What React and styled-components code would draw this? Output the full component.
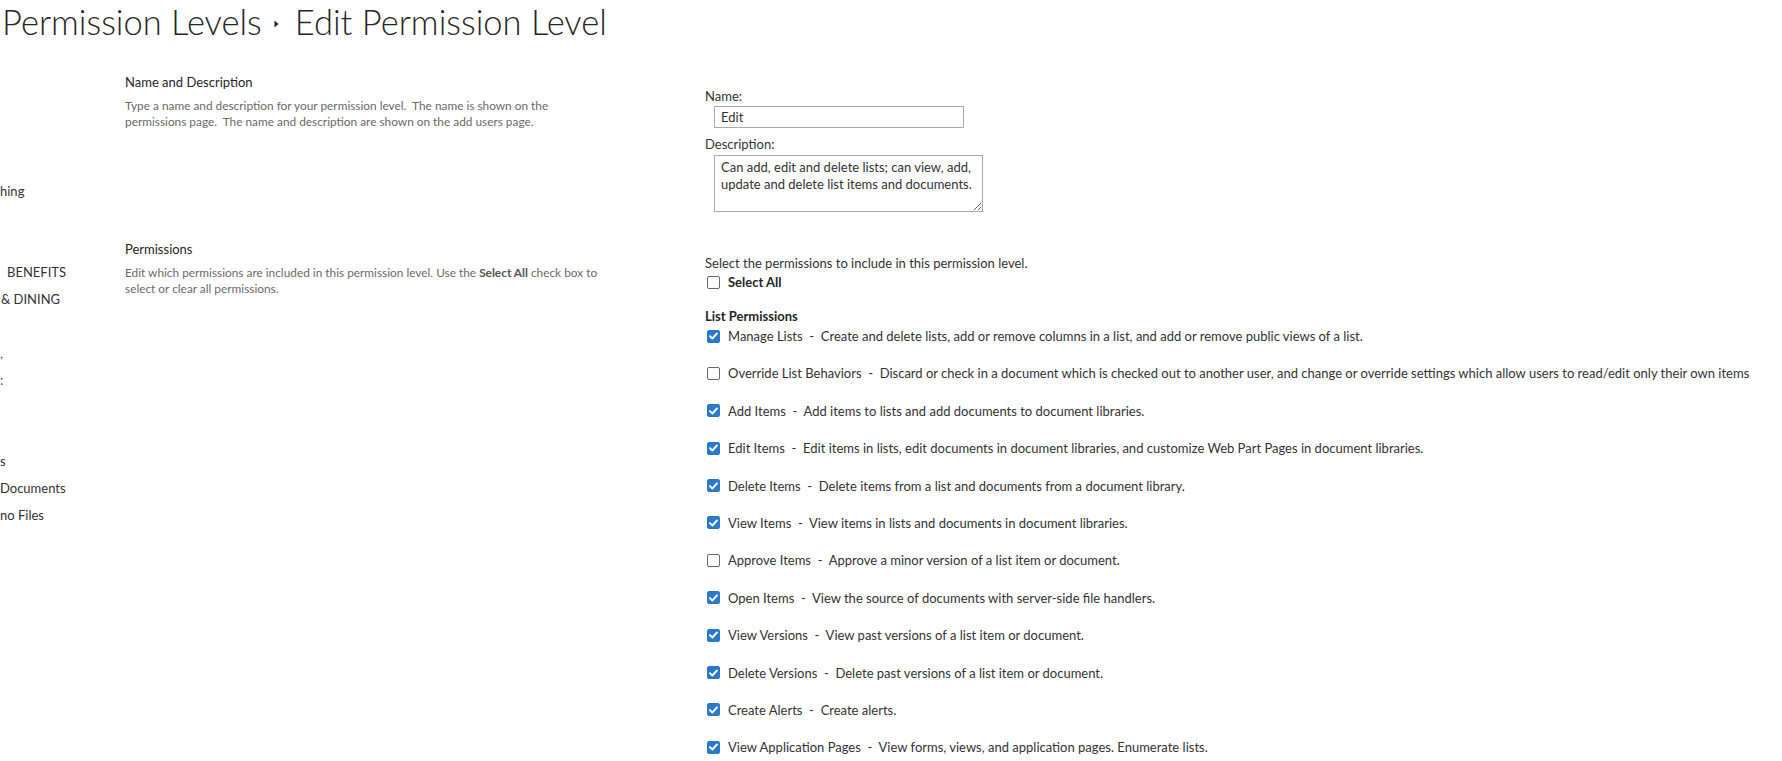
import React from "react";
import styled, { createGlobalStyle } from "styled-components";

const GlobalStyle = createGlobalStyle`
  html, body {
    margin: 0;
    padding: 0;
    background: #ffffff;
  }
  body {
    font-family: Lato, "Open Sans", "Liberation Sans", sans-serif;
    color: #333333;
    overflow: hidden;
  }
`;

const navItems = [
  { text: "hing", indent: 0 },
  { text: "" },
  { text: "" },
  { text: "BENEFITS", indent: 7 },
  { text: "& DINING", indent: 1 },
  { text: "" },
  { text: ",", indent: 0, link: true },
  { text: ":", indent: 0, link: true },
  { text: "" },
  { text: "" },
  { text: "s", indent: 0 },
  { text: "Documents", indent: 0 },
  { text: "no Files", indent: 0 },
];

const permissions = [
  { name: "Manage Lists", desc: "Create and delete lists, add or remove columns in a list, and add or remove public views of a list.", on: true },
  { name: "Override List Behaviors", desc: "Discard or check in a document which is checked out to another user, and change or override settings which allow users to read/edit only their own items", on: false },
  { name: "Add Items", desc: "Add items to lists and add documents to document libraries.", on: true },
  { name: "Edit Items", desc: "Edit items in lists, edit documents in document libraries, and customize Web Part Pages in document libraries.", on: true },
  { name: "Delete Items", desc: "Delete items from a list and documents from a document library.", on: true },
  { name: "View Items", desc: "View items in lists and documents in document libraries.", on: true },
  { name: "Approve Items", desc: "Approve a minor version of a list item or document.", on: false },
  { name: "Open Items", desc: "View the source of documents with server-side file handlers.", on: true },
  { name: "View Versions", desc: "View past versions of a list item or document.", on: true },
  { name: "Delete Versions", desc: "Delete past versions of a list item or document.", on: true },
  { name: "Create Alerts", desc: "Create alerts.", on: true },
  { name: "View Application Pages", desc: "View forms, views, and application pages. Enumerate lists.", on: true },
];

function CheckBox({ checked }) {
  return (
    <Box $checked={checked}>
      {checked && (
        <svg width="9" height="8" viewBox="0 0 9 8">
          <path
            d="M1 4.2 L3.4 6.5 L8 1.4"
            fill="none"
            stroke="#ffffff"
            strokeWidth="1.9"
            strokeLinecap="round"
            strokeLinejoin="round"
          />
        </svg>
      )}
    </Box>
  );
}

export default function App() {
  return (
    <Page>
      <GlobalStyle />
      <Title>
        <span>Permission Levels</span>
        <Separator width="5" height="8" viewBox="0 0 5 8">
          <path d="M0.5 0.5 L4.5 4 L0.5 7.5 Z" fill="#262626" />
        </Separator>
        <span>Edit Permission Level</span>
      </Title>
      <Body>
        <Nav>
          {navItems.map((item, i) => (
            <NavItem key={i} $indent={item.indent || 0} $link={item.link}>
              {item.text}
            </NavItem>
          ))}
        </Nav>
        <Form>
          <Section $top={29}>
            <SectionInfo>
              <SectionHeading>Name and Description</SectionHeading>
              <SectionText>
                Type a name and description for your permission level.&nbsp; The name is shown on the
                <br />
                permissions page.&nbsp; The name and description are shown on the add users page.
              </SectionText>
            </SectionInfo>
            <Controls>
              <FieldLabel>Name:</FieldLabel>
              <TextInput type="text" defaultValue="Edit" />
              <FieldLabel $top={7}>Description:</FieldLabel>
              <TextArea
                readOnly
                defaultValue="Can add, edit and delete lists; can view, add, update and delete list items and documents."
              />
            </Controls>
          </Section>
          <Section $top={28}>
            <SectionInfo>
              <SectionHeading>Permissions</SectionHeading>
              <SectionText>
                Edit which permissions are included in this permission level. Use the <b>Select All</b> check box to
                <br />
                select or clear all permissions.
              </SectionText>
            </SectionInfo>
            <Controls>
              <FieldLabel>Select the permissions to include in this permission level.</FieldLabel>
              <CheckRow>
                <CheckBox checked={false} />
                <CheckLabel $bold>Select All</CheckLabel>
              </CheckRow>
              <GroupHeading>List Permissions</GroupHeading>
              <PermList>
                {permissions.map((p) => (
                  <PermRow key={p.name}>
                    <CheckBox checked={p.on} />
                    <CheckLabel>
                      {p.name}
                      {"  -  "}
                      {p.desc}
                    </CheckLabel>
                  </PermRow>
                ))}
              </PermList>
            </Controls>
          </Section>
        </Form>
      </Body>
    </Page>
  );
}

const Page = styled.div`
  width: 1782px;
  height: 761px;
  overflow: hidden;
`;

const Title = styled.h1`
  margin: 0;
  padding-left: 2px;
  display: flex;
  align-items: center;
  height: 44px;
  font-size: 34.5px;
  line-height: 44px;
  font-weight: 300;
  color: #262626;
  white-space: nowrap;
`;

const Separator = styled.svg`
  flex: none;
  margin: 4px 16px 0 12px;
`;

const Body = styled.div`
  display: flex;
`;

const Nav = styled.nav`
  flex: none;
  width: 125px;
  padding-top: 134px;
  display: flex;
  flex-direction: column;
  overflow: hidden;
`;

const NavItem = styled.div`
  height: 27px;
  line-height: 27px;
  font-size: 13px;
  white-space: nowrap;
  margin-left: ${(p) => p.$indent}px;
  color: ${(p) => (p.$link ? "#2a5f9e" : "#333333")};
`;

const Form = styled.div`
  flex: 1;
  display: flex;
  flex-direction: column;
`;

const Section = styled.section`
  display: grid;
  grid-template-columns: 580px 1fr;
  padding-top: ${(p) => p.$top}px;
`;

const SectionInfo = styled.div`
  display: flex;
  flex-direction: column;
`;

const SectionHeading = styled.h3`
  margin: 0;
  font-size: 13px;
  line-height: 18px;
  font-weight: 400;
  color: #262626;
`;

const SectionText = styled.p`
  margin: 7px 0 0;
  font-size: 11.85px;
  line-height: 16px;
  color: #6a6a6a;
  white-space: nowrap;

  b {
    font-weight: 700;
    color: #555555;
  }
`;

const Controls = styled.div`
  padding-top: 14px;
  display: flex;
  flex-direction: column;
  align-items: flex-start;
`;

const FieldLabel = styled.div`
  margin-top: ${(p) => p.$top || 0}px;
  font-size: 13px;
  line-height: 18px;
  color: #333333;
`;

const TextInput = styled.input`
  box-sizing: border-box;
  margin: 1px 0 0 9px;
  width: 250px;
  height: 22px;
  padding: 0 6px;
  border: 1px solid #ababab;
  border-radius: 0;
  font-family: inherit;
  font-size: 13px;
  color: #333333;
  outline: none;
`;

const TextArea = styled.textarea`
  box-sizing: border-box;
  display: block;
  margin: 2px 0 0 9px;
  width: 269px;
  height: 57px;
  padding: 3px 6px;
  border: 1px solid #ababab;
  border-radius: 0;
  font-family: inherit;
  font-size: 13px;
  line-height: 17px;
  color: #333333;
  resize: both;
  outline: none;
`;

const CheckRow = styled.div`
  display: flex;
  align-items: center;
  gap: 8px;
  height: 20px;
  padding-left: 2px;
`;

const PermRow = styled(CheckRow)`
  margin-bottom: 17.4px;
`;

const Box = styled.span`
  box-sizing: border-box;
  flex: none;
  width: 13px;
  height: 13px;
  border-radius: 2px;
  display: flex;
  align-items: center;
  justify-content: center;
  border: 1px solid ${(p) => (p.$checked ? "#2b79c9" : "#6b6b6b")};
  background: ${(p) => (p.$checked ? "#2b79c9" : "#ffffff")};
`;

const CheckLabel = styled.span`
  font-size: 13px;
  line-height: 20px;
  white-space: pre;
  font-weight: ${(p) => (p.$bold ? 700 : 400)};
  color: ${(p) => (p.$bold ? "#262626" : "#333333")};
`;

const GroupHeading = styled.div`
  margin-top: 15px;
  font-size: 13px;
  line-height: 18px;
  font-weight: 700;
  color: #262626;
`;

const PermList = styled.div`
  margin-top: 1px;
  display: flex;
  flex-direction: column;
`;
